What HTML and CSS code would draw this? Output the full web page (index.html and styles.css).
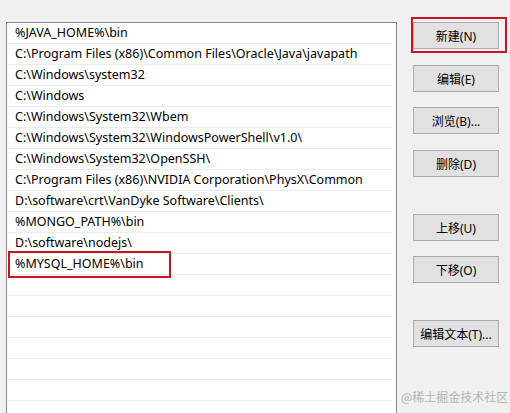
FILE: index.html
```html
<!DOCTYPE html>
<html lang="zh-CN">
<head>
<meta charset="utf-8">
<title>编辑环境变量</title>
<link rel="stylesheet" href="styles.css">
</head>
<body>
<div class="dialog">
  <div class="list">
    <div class="row">%JAVA_HOME%\bin</div>
    <div class="row">C:\Program Files (x86)\Common Files\Oracle\Java\javapath</div>
    <div class="row">C:\Windows\system32</div>
    <div class="row">C:\Windows</div>
    <div class="row">C:\Windows\System32\Wbem</div>
    <div class="row">C:\Windows\System32\WindowsPowerShell\v1.0\</div>
    <div class="row">C:\Windows\System32\OpenSSH\</div>
    <div class="row">C:\Program Files (x86)\NVIDIA Corporation\PhysX\Common</div>
    <div class="row">D:\software\crt\VanDyke Software\Clients\</div>
    <div class="row">%MONGO_PATH%\bin</div>
    <div class="row">D:\software\nodejs\</div>
    <div class="row marked">%MYSQL_HOME%\bin<span class="mark-row"></span></div>
    <div class="row"></div>
    <div class="row"></div>
    <div class="row"></div>
    <div class="row"></div>
    <div class="row"></div>
    <div class="row"></div>
  </div>
  <div class="buttons">
    <button class="btn btn-new">新建(N)<span class="mark-btn"></span></button>
    <button class="btn g16">编辑(E)</button>
    <button class="btn g15">浏览(B)...</button>
    <button class="btn g16">删除(D)</button>
    <button class="btn g37">上移(U)</button>
    <button class="btn g15">下移(O)</button>
    <button class="btn g37">编辑文本(T)...</button>
  </div>
</div>
<div class="watermark">@稀土掘金技术社区</div>
</body>
</html>
```
FILE: styles.css
```css
html, body {
  margin: 0;
  padding: 0;
}
body {
  width: 510px;
  height: 413px;
  overflow: hidden;
  background: #f0f0f0;
  font-family: "Noto Sans", "Noto Sans CJK SC", sans-serif;
  font-size: 12px;
  color: #000;
  position: relative;
}
.dialog {
  display: flex;
  align-items: flex-start;
  height: 413px;
  box-sizing: border-box;
  padding: 22px 0 0 6px;
}
.list {
  width: 384px;
  height: 390px;
  overflow: hidden;
  background: #fff;
  border: 1px solid #828790;
  border-bottom: none;
  padding: 0 4px 0 1px;
  display: flex;
  flex-direction: column;
}
.row {
  height: 20px;
  line-height: 20px;
  font-size: 12.5px;
  border-bottom: 1px solid #ebebeb;
  padding-left: 7px;
  white-space: nowrap;
  flex: none;
}
.marked {
  position: relative;
}
.mark-row {
  position: absolute;
  left: 0;
  top: -3px;
  width: 163px;
  height: 27px;
  border: 2px solid #c8161d;
  box-sizing: border-box;
}
.buttons {
  display: flex;
  flex-direction: column;
  margin-left: 16px;
}
.btn {
  width: 86px;
  height: 27px;
  background: #e1e1e1;
  border: 1px solid #adadad;
  font-family: "Noto Sans", "Noto Sans CJK SC", sans-serif;
  font-size: 12px;
  color: #000;
  padding: 0;
  margin: 0;
  box-sizing: border-box;
  position: relative;
}
.g15 { margin-top: 15px; }
.g16 { margin-top: 16px; }
.g37 { margin-top: 37px; }
.mark-btn {
  position: absolute;
  left: -3px;
  top: -6px;
  width: 96px;
  height: 36px;
  border: 2px solid #c8161d;
  box-sizing: border-box;
}
.watermark {
  position: absolute;
  left: 401px;
  top: 388px;
  font-size: 12px;
  color: #b4b4b4;
  font-family: "Noto Sans CJK SC", sans-serif;
}
```
